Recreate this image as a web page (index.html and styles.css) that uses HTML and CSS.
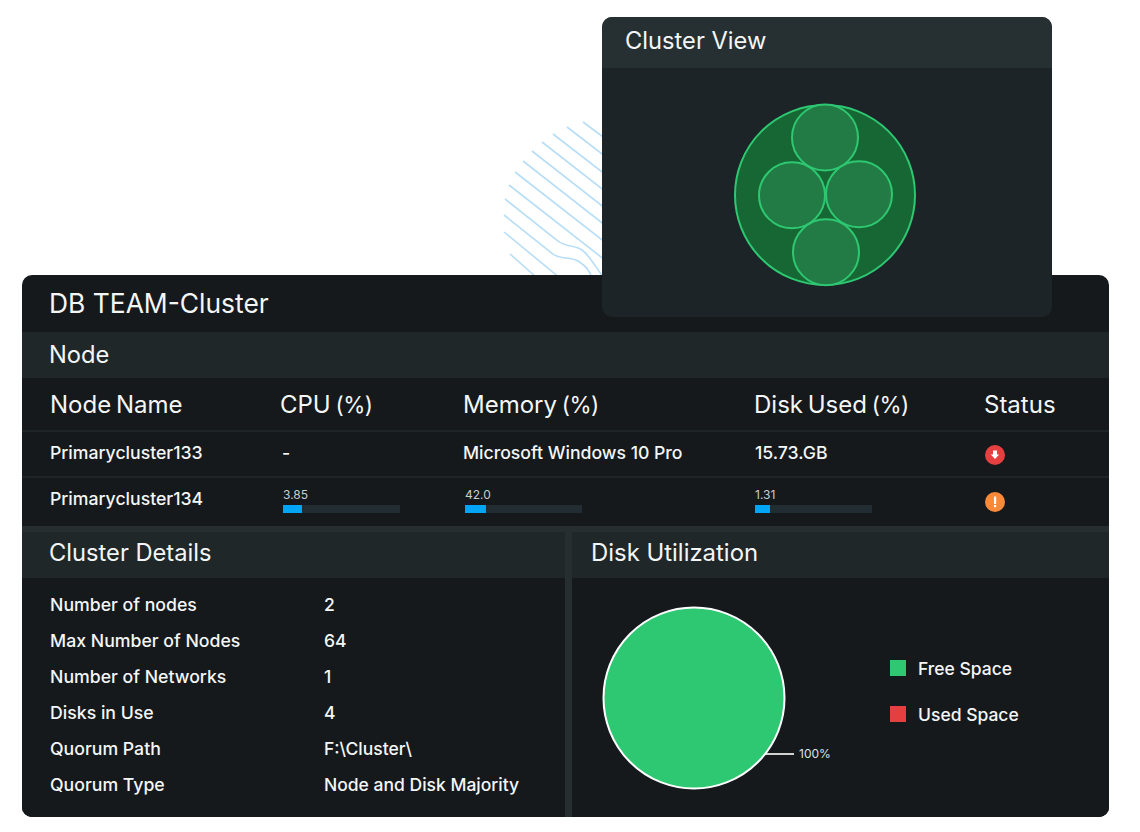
FILE: index.html
```html
<!DOCTYPE html>
<html lang="en">
<head>
<meta charset="utf-8">
<title>DB TEAM-Cluster</title>
<link rel="stylesheet" href="styles.css">
</head>
<body>
<div class="stage">
  <svg class="pattern" viewBox="500 118 110 160" width="110" height="160" aria-hidden="true">
    <g fill="none" stroke="#b7def6" stroke-width="1.6">
      <path d="M583 122L610 142"/>
      <path d="M567 127L610 160"/>
      <path d="M553 134L610 178"/>
      <path d="M542 142L610 195"/>
      <path d="M532 151L610 212"/>
      <path d="M523 161L610 229"/>
      <path d="M515 172L610 246"/>
      <path d="M509 185L610 264"/>
      <path d="M505 199L558 241C565 247 575 245 582 250C590 256 596 268 604 278"/>
      <path d="M504 215L553 254C560 260 570 256 578 261C586 266 589 270 592 278"/>
      <path d="M504 232L560 278"/>
      <path d="M510 254L537 278"/>
    </g>
  </svg>

  <main class="panel">
    <h1 class="panel-title">DB TEAM-Cluster</h1>
    <h2 class="bar-title">Node</h2>
    <div class="row head">
      <div>Node Name</div>
      <div>CPU <span class="pct">(%)</span></div>
      <div>Memory <span class="pct">(%)</span></div>
      <div>Disk Used <span class="pct">(%)</span></div>
      <div>Status</div>
    </div>
    <div class="row data">
      <div>Primarycluster133</div>
      <div class="dash">-</div>
      <div>Microsoft Windows 10 Pro</div>
      <div class="nudge">15.73.GB</div>
      <div class="nudge">
        <svg class="status" viewBox="0 0 20 20" width="20" height="20"><circle cx="10" cy="10" r="10" fill="#e53f3f"/><path d="M8 5.500h4v4h2.200L10 14 5.800 9.500H8z" fill="#fff"/></svg>
      </div>
    </div>
    <div class="row data last">
      <div>Primarycluster134</div>
      <div class="meter-cell shift-cpu">
        <span class="meter-value">3.85</span>
        <span class="meter"><span class="meter-fill" style="width:19px"></span></span>
      </div>
      <div class="meter-cell shift">
        <span class="meter-value">42.0</span>
        <span class="meter"><span class="meter-fill" style="width:21px"></span></span>
      </div>
      <div class="meter-cell nudge">
        <span class="meter-value">1.31</span>
        <span class="meter"><span class="meter-fill" style="width:15px"></span></span>
      </div>
      <div class="nudge">
        <svg class="status" viewBox="0 0 20 20" width="20" height="20"><circle cx="10" cy="10" r="10" fill="#fb8a38"/><rect x="9" y="4.500" width="2.200" height="7.500" rx=".6" fill="#fff"/><rect x="9" y="13" width="2.200" height="2.200" fill="#fff"/></svg>
      </div>
    </div>

    <div class="lower">
      <section class="details">
        <h2 class="bar-title">Cluster Details</h2>
        <dl class="facts">
          <div class="fact"><dt>Number of nodes</dt><dd>2</dd></div>
          <div class="fact"><dt>Max Number of Nodes</dt><dd>64</dd></div>
          <div class="fact"><dt>Number of Networks</dt><dd>1</dd></div>
          <div class="fact"><dt>Disks in Use</dt><dd>4</dd></div>
          <div class="fact"><dt>Quorum Path</dt><dd>F:\Cluster\</dd></div>
          <div class="fact"><dt>Quorum Type</dt><dd>Node and Disk Majority</dd></div>
        </dl>
      </section>
      <section class="disk">
        <h2 class="bar-title">Disk Utilization</h2>
        <div class="disk-body">
          <svg class="pie" viewBox="0 0 270 190" width="270" height="190">
            <circle cx="92" cy="92" r="90.500" fill="#2ec872" stroke="#fff" stroke-width="2"/>
            <path d="M163 148H192" stroke="#fff" stroke-width="1.600" fill="none"/>
            <text class="pie-label" x="197" y="152">100%</text>
          </svg>
          <ul class="legend">
            <li><span class="swatch free"></span>Free Space</li>
            <li><span class="swatch used"></span>Used Space</li>
          </ul>
        </div>
      </section>
    </div>
  </main>

  <aside class="cluster">
    <h2 class="cluster-title">Cluster View</h2>
    <div class="cluster-body">
      <svg viewBox="0 0 186 186" width="186" height="186">
        <g stroke="#2ec872" stroke-width="2">
          <circle cx="93" cy="93" r="90" fill="#166734"/>
          <g fill="#227a44">
            <circle cx="93" cy="35.500" r="33"/>
            <circle cx="60" cy="93.300" r="33"/>
            <circle cx="127" cy="92.300" r="33"/>
            <circle cx="94" cy="150.300" r="33"/>
          </g>
        </g>
      </svg>
    </div>
  </aside>
</div>
</body>
</html>
```
FILE: styles.css
```css
* { box-sizing: border-box; }
html, body { margin: 0; padding: 0; background: #fff; }
body { font-family: Inter, "Noto Sans", "Liberation Sans", sans-serif; color: #f4f6f6; }
h1, h2, dl, dd, ul { margin: 0; padding: 0; font-weight: 400; }

.stage { position: relative; width: 1140px; height: 832px; padding: 275px 31px 15px 22px; overflow: hidden; }
.pattern { position: absolute; left: 500px; top: 118px; }

.panel { position: relative; height: 542px; background: #15191c; border-radius: 10px; overflow: hidden; display: flex; flex-direction: column; }
.panel-title { height: 57px; padding-left: 27px; font-size: 26.4px; line-height: 57px; }
.bar-title { height: 46px; padding-left: 27px; background: #1f2729; font-size: 23.7px; line-height: 46px; }

.row { display: grid; grid-template-columns: 230px 183px 291px 230px 1fr; padding-left: 28px; align-items: center; border-bottom: 2px solid #1e2528; }
.head { height: 54px; font-size: 24px; word-spacing: -2px; }
.pct { font-size: 22.5px; letter-spacing: -0.5px; }
.data { height: 46px; padding-bottom: 4px; font-size: 17.65px; font-weight: 500; }
.data.last { height: 48px; border-bottom: 0; padding-bottom: 8px; }
.nudge { padding-left: 1px; }
.dash { padding-left: 2px; }
.shift { padding-left: 2px; }
.shift-cpu { padding-left: 3px; }
.status { display: block; margin-top: 6px; }
.last .status { margin-top: 8px; }
.meter-cell { display: flex; flex-direction: column; gap: 4px; padding-top: 5px; }
.meter-value { font-size: 12px; line-height: 13px; font-weight: 400; color: #c9cdce; }
.meter { display: block; width: 117px; height: 8px; background: #222c33; }
.meter-fill { display: block; height: 8px; background: #00a6f5; }

.lower { flex: 1; display: grid; grid-template-columns: 543px 1fr; column-gap: 7px; border-top: 6px solid #262e30; background: #262e30; }
.details, .disk { background: #15191c; display: flex; flex-direction: column; }
.details .bar-title, .disk .bar-title { line-height: 42px; }
.disk .bar-title { padding-left: 19px; font-size: 23.9px; }

.facts { padding-top: 8px; }
.fact { display: grid; grid-template-columns: 274px 1fr; padding-left: 28px; height: 36px; align-items: center; font-size: 17.7px; font-weight: 450; }
.fact dd { font-size: 17.5px; font-weight: 450; }

.disk-body { display: flex; padding: 28px 0 0 30px; }
.pie { display: block; flex: none; }
.pie-label { font-size: 12px; fill: #dfe2e2; }
.legend { list-style: none; margin: 39px 0 0 18px; font-size: 17.5px; font-weight: 450; }
.legend li { display: flex; align-items: center; gap: 12px; height: 46px; white-space: nowrap; }
.swatch { width: 16px; height: 16px; }
.free { background: #2ec872; }
.used { background: #e53f3f; }

.cluster { position: absolute; left: 602px; top: 17px; width: 450px; height: 300px; border-radius: 10px; overflow: hidden; background: #1c2428; }
.cluster-title { height: 51px; padding-left: 23px; background: #263033; font-size: 23.7px; line-height: 48px; }
.cluster-body { display: flex; justify-content: center; padding: 34px 4px 0 0; }
```
